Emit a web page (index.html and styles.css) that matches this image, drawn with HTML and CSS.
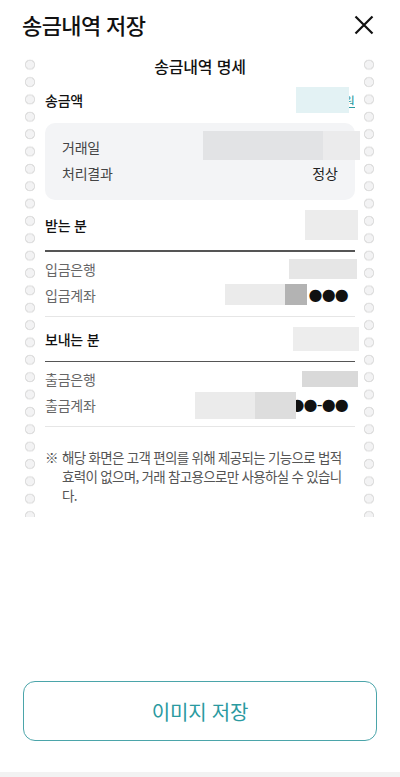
FILE: index.html
```html
<!DOCTYPE html>
<html lang="ko">
<head>
<meta charset="utf-8">
<title>송금내역 저장</title>
<link rel="stylesheet" href="styles.css">
</head>
<body>
<div class="page">
  <header class="header">
    <h1 class="title">송금내역 저장</h1>
    <button class="close" aria-label="닫기">
      <svg width="20" height="20" viewBox="0 0 20 20"><path d="M1.5 1.5 L18.5 18.5 M18.5 1.5 L1.5 18.5" stroke="#111" stroke-width="2.2" fill="none" stroke-linecap="butt"/></svg>
    </button>
  </header>

  <main class="main">
    <section class="receipt">
      <div class="perf"></div>
      <div class="content">
        <h2 class="r-title">송금내역 명세</h2>

        <div class="row row-amount">
          <span class="label strong">송금액</span>
          <span class="value"><span class="mask mask-teal"></span><span class="won">원</span></span>
        </div>

        <div class="infobox">
          <div class="row row-box">
            <span class="label dark">거래일</span>
            <span class="value"><span class="mask mask-date"></span><span class="mask mask-date2"></span></span>
          </div>
          <div class="row row-box">
            <span class="label dark">처리결과</span>
            <span class="value text">정상</span>
          </div>
        </div>

        <div class="row row-head">
          <span class="label strong">받는 분</span>
          <span class="value"><span class="mask mask-recv"></span></span>
        </div>
        <div class="rule-dark"></div>
        <div class="row row-item first">
          <span class="label">입금은행</span>
          <span class="value"><span class="mask mask-bank1"></span></span>
        </div>
        <div class="row row-item">
          <span class="label">입금계좌</span>
          <span class="value"><span class="mask mask-acc1a"></span><span class="mask mask-acc1b"></span><span class="dots">●●●</span></span>
        </div>
        <div class="rule-light"></div>

        <div class="row row-head2">
          <span class="label strong">보내는 분</span>
          <span class="value"><span class="mask mask-send"></span></span>
        </div>
        <div class="rule-dark"></div>
        <div class="row row-item first">
          <span class="label">출금은행</span>
          <span class="value"><span class="mask mask-bank2"></span></span>
        </div>
        <div class="row row-item">
          <span class="label">출금계좌</span>
          <span class="value"><span class="mask mask-acc2a"></span><span class="mask mask-acc2b"></span><span class="dots dots2">●●-●●</span></span>
        </div>
        <div class="rule-light"></div>

        <p class="notice"><span class="mark">※</span><span class="notice-text">해당 화면은 고객 편의를 위해 제공되는 기능으로 법적 효력이 없으며, 거래 참고용으로만 사용하실 수 있습니다.</span></p>
      </div>
      <div class="perf"></div>
    </section>
  </main>

  <div class="actions">
    <button class="save">이미지 저장</button>
  </div>
  <div class="bottom-strip"></div>
</div>
</body>
</html>
```

FILE: styles.css
```css
* { box-sizing: border-box; }
html, body { margin: 0; padding: 0; background: #fff; }
body {
  font-family: "Noto Sans CJK KR", "Noto Sans", sans-serif;
  color: #111;
}
.page {
  width: 400px;
  height: 777px;
  display: flex;
  flex-direction: column;
}
.header {
  height: 56px;
  display: flex;
  align-items: flex-start;
  justify-content: space-between;
  padding: 8px 26px 0 22px;
}
.title {
  margin: 0;
  font-size: 22px;
  font-weight: 500;
  line-height: 32px;
  letter-spacing: -0.6px;
}
.close {
  border: 0;
  background: none;
  padding: 0;
  margin-top: 7px;
  width: 20px;
  height: 20px;
}
.close svg { display: block; }

.main { flex: 1; }

.receipt {
  height: 461px;
  display: grid;
  grid-template-columns: 10px 310px 10px;
  column-gap: 10px;
  padding-left: 25px;
}
.receipt .perf:last-child { margin-left: -1px; }
.perf {
  background-image: radial-gradient(circle at 5px 8.68px, #f3f3f4 0 3.8px, #dedede 4.2px 4.9px, rgba(255,255,255,0) 5.4px);
  background-size: 10px 17.36px;
  background-repeat: repeat-y;
}
.content { min-width: 0; }

.r-title {
  margin: 0;
  text-align: center;
  font-size: 16px;
  font-weight: 500;
  line-height: 20px;
  letter-spacing: -0.2px;
}

.row {
  display: flex;
  align-items: center;
  justify-content: space-between;
}
.label {
  font-size: 14px;
  color: #666;
  letter-spacing: -0.2px;
}
.label.strong { color: #111; font-weight: 500; }
.label.dark { color: #444; }
.value {
  display: flex;
  align-items: center;
}
.value.text { font-size: 14px; color: #222; }

.mask { display: block; }

.row-amount { height: 26px; margin-top: 11px; }
.mask-teal { width: 53px; height: 26px; background: #e3f2f4; position: relative; z-index: 1; margin-right: -8px; }
.won { color: #2a9aa0; font-size: 13px; text-decoration: underline; width: 14px; text-align: right; }

.infobox {
  margin-top: 10px;
  height: 77px;
  background: #f3f4f6;
  border-radius: 10px;
  padding: 11px 17px 0 17px;
}
.row-box { height: 26px; }
.mask-date { width: 120px; height: 29px; background: #e2e3e5; margin-top: -3px; }
.mask-date2 { width: 37px; height: 29px; background: #ebebec; margin-right: -22px; margin-top: -3px; }

.row-head { height: 30px; margin-top: 10px; }
.mask-recv { width: 53px; height: 30px; background: #ececec; margin-right: -3px; }
.row-head2 { height: 26px; margin-top: 9px; }
.mask-send { width: 66px; height: 24px; background: #ededed; margin-right: -4px; }

.rule-dark { height: 1.5px; background: #555; margin-top: 10px; }
.row-head2 + .rule-dark { margin-top: 9px; }
.rule-light { height: 1px; background: #e6e6e6; margin-top: 8px; }

.row-item { height: 26px; }
.row-item.first { margin-top: 4px; }

.mask-bank1 { width: 68px; height: 20px; background: #e6e6e6; margin-right: -2px; }
.mask-acc1a { width: 60px; height: 21px; background: #ebebeb; }
.mask-acc1b { width: 22px; height: 21px; background: #b3b3b3; }
.dots {
  font-family: "DejaVu Sans", sans-serif;
  font-size: 16px;
  line-height: 1;
  color: #111;
  margin-left: 2px;
  margin-right: 7px;
  letter-spacing: -0.8px;
}
.mask-bank2 { width: 56px; height: 16px; background: #d9d9d9; margin-right: -3px; }
.mask-acc2a { width: 60px; height: 27px; background: #ebebeb; }
.mask-acc2b { width: 41px; height: 27px; background: #dddddd; position: relative; z-index: 1; }
.dots2 { margin-left: -6px; }

.notice {
  margin: 21px 0 0;
  display: flex;
  font-size: 13.5px;
  line-height: 19px;
  color: #555;
  letter-spacing: -0.7px;
}
.mark { width: 17px; flex: none; }
.notice-text { flex: 1; }

.actions { padding: 0 23px; }
.save {
  width: 100%;
  height: 60px;
  border: 1.5px solid #4ba5aa;
  border-radius: 12px;
  background: #fff;
  color: #2a9aa0;
  font-family: "Noto Sans CJK KR", "Noto Sans", sans-serif;
  font-size: 20px;
  letter-spacing: -0.2px;
}
.bottom-strip { height: 5px; background: #f2f2f2; margin-top: 31px; }
```
